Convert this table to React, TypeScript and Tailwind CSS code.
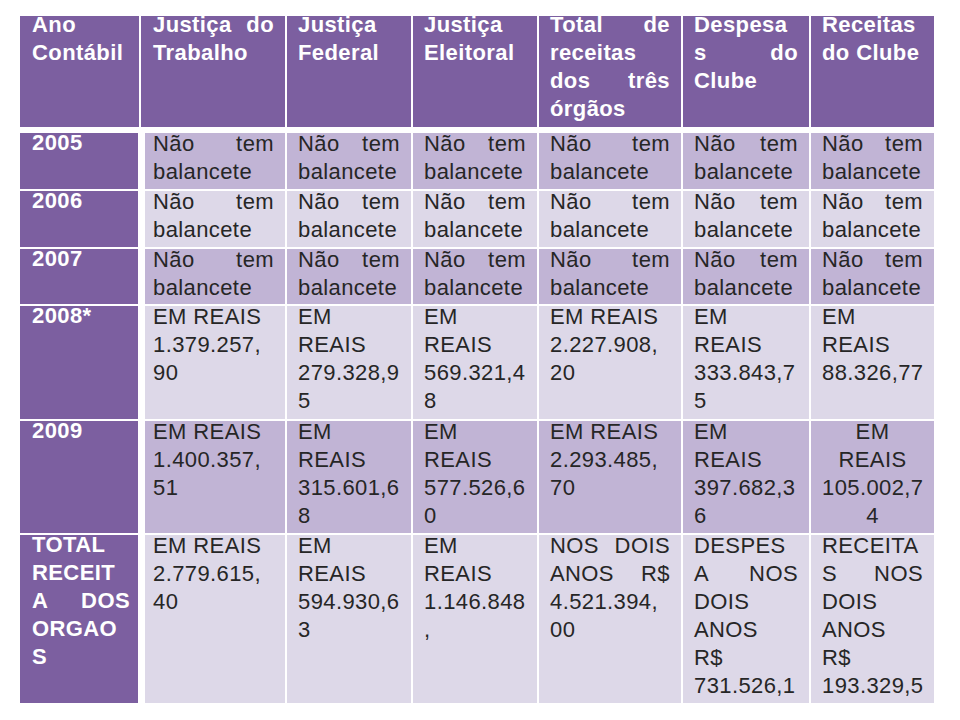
type Align = 'l' | 'j' | 'c';

interface Line {
  text: string;
  align: Align;
}

type CellLines = (string | Line)[];

// justified line (PowerPoint "justify" spreads the words to both edges)
const j = (text: string): Line => ({ text, align: 'j' });
const c = (text: string): Line => ({ text, align: 'c' });

const GRID = 'grid grid-cols-[119px_144px_124px_124px_142px_126px_123px] gap-x-[2px]';

const noBalancete: CellLines = [j('Não tem'), 'balancete'];

interface RowData {
  label: CellLines;
  height: string;
  shade: 'dark' | 'light';
  cells: CellLines[];
}

const header: CellLines[] = [
  ['Ano', 'Contábil'],
  [j('Justiça do'), 'Trabalho'],
  ['Justiça', 'Federal'],
  ['Justiça', 'Eleitoral'],
  [j('Total de'), 'receitas', j('dos três'), 'órgãos'],
  ['Despesa', j('s do'), 'Clube'],
  ['Receitas', 'do Clube'],
];

const rows: RowData[] = [
  {
    label: ['2005'],
    height: 'h-[56px]',
    shade: 'dark',
    cells: Array(6).fill(noBalancete),
  },
  {
    label: ['2006'],
    height: 'h-[56px]',
    shade: 'light',
    cells: Array(6).fill(noBalancete),
  },
  {
    label: ['2007'],
    height: 'h-[55px]',
    shade: 'dark',
    cells: Array(6).fill(noBalancete),
  },
  {
    label: ['2008*'],
    height: 'h-[113px]',
    shade: 'light',
    cells: [
      ['EM REAIS', '1.379.257,', '90'],
      ['EM', 'REAIS', '279.328,9', '5'],
      ['EM', 'REAIS', '569.321,4', '8'],
      ['EM REAIS', '2.227.908,', '20'],
      ['EM', 'REAIS', '333.843,7', '5'],
      ['EM', 'REAIS', '88.326,77'],
    ],
  },
  {
    label: ['2009'],
    height: 'h-[112px]',
    shade: 'dark',
    cells: [
      ['EM REAIS', '1.400.357,', '51'],
      ['EM', 'REAIS', '315.601,6', '8'],
      ['EM', 'REAIS', '577.526,6', '0'],
      ['EM REAIS', '2.293.485,', '70'],
      ['EM', 'REAIS', '397.682,3', '6'],
      [c('EM'), c('REAIS'), c('105.002,7'), c('4')],
    ],
  },
  {
    label: ['TOTAL', 'RECEIT', j('A DOS'), 'ORGAO', 'S'],
    height: 'h-[168px]',
    shade: 'light',
    cells: [
      ['EM REAIS', '2.779.615,', '40'],
      ['EM', 'REAIS', '594.930,6', '3'],
      ['EM', 'REAIS', '1.146.848', ','],
      [j('NOS DOIS'), j('ANOS R$'), '4.521.394,', '00'],
      ['DESPES', j('A NOS'), 'DOIS', 'ANOS', 'R$', '731.526,1'],
      ['RECEITA', j('S NOS'), 'DOIS', 'ANOS', 'R$', '193.329,5'],
    ],
  },
];

function Lines({ lines }: { lines: CellLines }) {
  return (
    <>
      {lines.map((l, i) => {
        const line = typeof l === 'string' ? { text: l, align: 'l' as Align } : l;
        const alignClass =
          line.align === 'j'
            ? 'text-justify [text-align-last:justify]'
            : line.align === 'c'
            ? 'text-center'
            : 'text-left';
        return (
          <div key={i} className={`whitespace-pre-line ${alignClass}`}>
            {line.text}
          </div>
        );
      })}
    </>
  );
}

export default function App() {
  return (
    <div className="w-[960px] h-[720px] overflow-hidden bg-white font-['Liberation_Sans',Arial,sans-serif] text-[22px] leading-[28px] tracking-[0.4px]">
      <div className="pt-4 pl-5 w-[934px] flex flex-col">
        {/* header row */}
        <div className={`${GRID} h-[111px]`}>
          {header.map((cell, i) => (
            <div
              key={i}
              className={`bg-[#7c5fa0] font-bold text-white ${
                i === 0 || i === 1 ? 'pl-3' : 'pl-[11px]'
              } ${i === 0 ? 'pr-2' : 'pr-[11px]'}`}
            >
              <div className="-mt-[5px]">
                <Lines lines={cell} />
              </div>
            </div>
          ))}
        </div>

        <div className="mt-[6px] flex flex-col gap-y-[2px]">
          {rows.map((row, r) => (
            <div key={r} className={`${GRID} ${row.height}`}>
              <div className="mr-px bg-[#7c5fa0] pl-3 pr-2 font-bold text-white">
                <div className="-mt-1">
                  <Lines lines={row.label} />
                </div>
              </div>
              {row.cells.map((cell, i) => (
                <div
                  key={i}
                  className={`text-[#262626] ${
                    row.shade === 'dark' ? 'bg-[#c1b4d5]' : 'bg-[#ddd8e8]'
                  } ${i === 0 ? 'ml-1 pl-2 pr-[11px]' : 'px-[11px]'}`}
                >
                  <div className="-mt-[3px]">
                    <Lines lines={cell} />
                  </div>
                </div>
              ))}
            </div>
          ))}
        </div>
      </div>
    </div>
  );
}
